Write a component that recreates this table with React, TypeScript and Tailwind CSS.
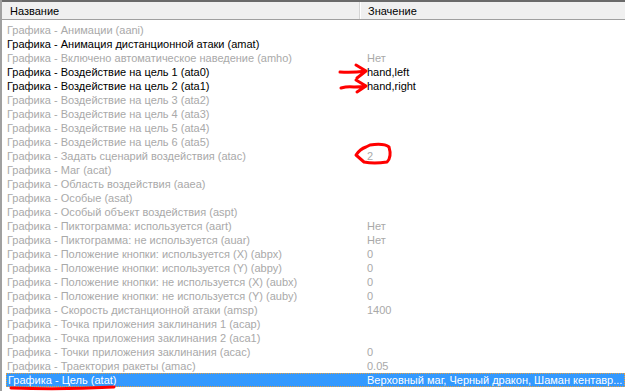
import React from "react";

type Row = { name: string; value?: string; active?: boolean };

const rows: Row[] = [
  { name: "Графика - Анимации (aani)" },
  { name: "Графика - Анимация дистанционной атаки (amat)", active: true },
  { name: "Графика - Включено автоматическое наведение (amho)", value: "Нет" },
  { name: "Графика - Воздействие на цель 1 (ata0)", value: "hand,left", active: true },
  { name: "Графика - Воздействие на цель 2 (ata1)", value: "hand,right", active: true },
  { name: "Графика - Воздействие на цель 3 (ata2)" },
  { name: "Графика - Воздействие на цель 4 (ata3)" },
  { name: "Графика - Воздействие на цель 5 (ata4)" },
  { name: "Графика - Воздействие на цель 6 (ata5)" },
  { name: "Графика - Задать сценарий воздействия (atac)", value: "2" },
  { name: "Графика - Маг (acat)" },
  { name: "Графика - Область воздействия (aaea)" },
  { name: "Графика - Особые (asat)" },
  { name: "Графика - Особый объект воздействия (aspt)" },
  { name: "Графика - Пиктограмма: используется (aart)", value: "Нет" },
  { name: "Графика - Пиктограмма: не используется (auar)", value: "Нет" },
  { name: "Графика - Положение кнопки: используется (X) (abpx)", value: "0" },
  { name: "Графика - Положение кнопки: используется (Y) (abpy)", value: "0" },
  { name: "Графика - Положение кнопки: не используется (X) (aubx)", value: "0" },
  { name: "Графика - Положение кнопки: не используется (Y) (auby)", value: "0" },
  { name: "Графика - Скорость дистанционной атаки (amsp)", value: "1400" },
  { name: "Графика - Точка приложения заклинания 1 (acap)" },
  { name: "Графика - Точка приложения заклинания 2 (aca1)" },
  { name: "Графика - Точки приложения заклинания (acac)", value: "0" },
  { name: "Графика - Траектория ракеты (amac)", value: "0.05" },
];

export default function App() {
  return (
    <div
      className="relative w-[625px] h-[391px] overflow-hidden bg-white border-l-2 border-[#a0a0a0] text-[11px] leading-[14px]"
      style={{ fontFamily: '"Liberation Sans", Arial, sans-serif' }}
    >
      {/* column header */}
      <div className="flex h-[20px] bg-[#f0f0f0] border-t-2 border-[#6a6a6a] border-b border-b-[#a0a0a0] text-black">
        <div className="w-[358px] pl-[8px] flex items-center border-r border-[#d5d5d5]">Название</div>
        <div className="w-px bg-white" />
        <div className="flex-1 pl-[7px] flex items-center">Значение</div>
      </div>

      {/* list */}
      <div className="pt-[3px]">
        {rows.map((r) => (
          <div key={r.name} className={`flex h-[14px] ${r.active ? "text-black" : "text-[#a9a9a9]"}`}>
            <div className="w-[360px] pl-[5px] whitespace-nowrap overflow-hidden">{r.name}</div>
            <div className="flex-1 pl-[5px] whitespace-nowrap">{r.value}</div>
          </div>
        ))}
        <div className="flex h-[14px] ml-[4px] bg-[#3399ff] text-white border border-dotted border-[#e8a040]">
          <div className="w-[355px] pl-[1px] whitespace-nowrap overflow-hidden leading-[12px]">Графика - Цель (atat)</div>
          <div className="flex-1 pl-[5px] whitespace-nowrap leading-[12px]">
            Верховный маг, Черный дракон, Шаман кентавр...
          </div>
        </div>
      </div>

      {/* red annotations drawn on top */}
      <svg className="absolute left-0 top-0 pointer-events-none" width="625" height="391">
        <g fill="none" stroke="#ff0000" strokeWidth="3" strokeLinecap="round" strokeLinejoin="round">
          <path d="M338 72 Q350 73 364 71 M354 65 L364 71 L355 78" />
          <path d="M339 88 Q346 86 352 87 Q358 87 364 86 M354 80 L364 86 L355 92" />
          <path d="M368 145 Q382 143 387 147 Q390 157 385 162 Q372 164 362 162 L354 155 Q358 149 364 147 Z" />
          <path d="M9 388 Q60 390 112 387" />
        </g>
      </svg>
    </div>
  );
}
